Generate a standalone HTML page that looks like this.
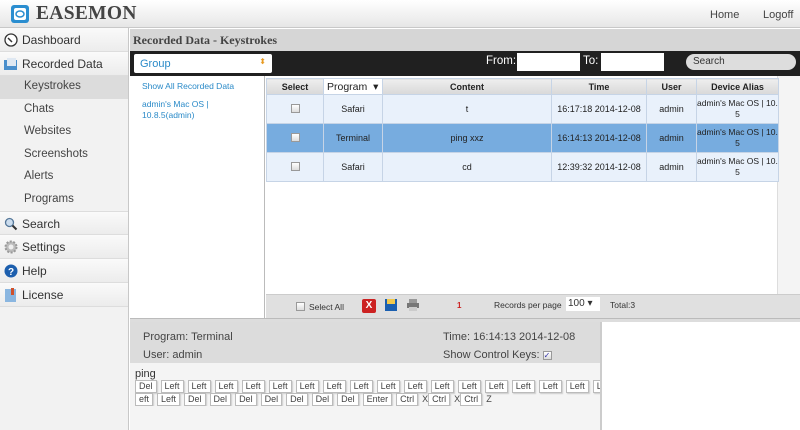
<!DOCTYPE html>
<html><head><meta charset="utf-8"><style>
*{box-sizing:border-box;margin:0;padding:0}
body{width:800px;height:430px;overflow:hidden;font-family:"Liberation Sans","DejaVu Sans",sans-serif;background:#fff;position:relative;font-size:12px;color:#333}
.abs{position:absolute}
#hdr{left:0;top:0;width:800px;height:28px;background:linear-gradient(#fff,#e6e6e6);border-bottom:1px solid #c8c8c8}
#logo{left:36px;top:3px;font-family:"Liberation Serif",serif;font-weight:bold;font-size:19.5px;color:#444;letter-spacing:.3px}
#side{left:0;top:28px;width:129px;height:402px;background:#f2f2f2;border-right:1px solid #c8c8c8}
.si{position:absolute;left:0;width:128px;height:24px;border-bottom:1px solid #ddd;background:linear-gradient(#fafafa,#ececec);font-size:12px;color:#333;padding:5px 0 0 22px}
.sub{position:absolute;left:24px;font-size:11.5px;color:#444}
.ico{position:absolute;left:4px;top:5px;width:14px;height:14px}
#title{left:130px;top:29px;width:670px;height:22px;background:#d6d6d6;font-family:"Liberation Serif",serif;font-weight:bold;font-size:12px;color:#444;padding:4px 0 0 3px}
#bar{left:130px;top:51px;width:670px;height:25px;background:#202020}
table{border-collapse:collapse;font-size:9px;color:#222;table-layout:fixed}
td,th{border:1px solid #c6d4e6;text-align:center;padding:0;overflow:hidden}
th{background:linear-gradient(#eee,#d8d8d8);height:16px;font-size:9px}
tr.r td{background:#e9f1fb;height:29px}
tr.s td{background:#77acdf}
td.d{font-size:8.5px;line-height:11px;white-space:nowrap}
.cb{display:inline-block;width:9px;height:9px;border:1px solid #999;background:linear-gradient(#fff,#ddd)}
.k{display:inline-block;border:1px solid #bbb;background:#fff;box-shadow:1px 1px 1px #ccc;padding:0 3px;margin-right:4px;font-size:9px;line-height:11px}
</style></head><body>
<div id="hdr" class="abs"></div>
<svg class="abs" style="left:11px;top:5px" width="18" height="18"><rect x="0" y="0" width="18" height="18" rx="3" fill="#2b8ed0"/><rect x="3" y="3" width="12" height="12" rx="2" fill="#fff"/><ellipse cx="9" cy="9" rx="4" ry="3" fill="none" stroke="#2b8ed0" stroke-width="1.5"/></svg>
<div id="logo" class="abs">EASEMON</div>
<div class="abs" style="left:710px;top:9px;font-size:11px;color:#444">Home</div>
<div class="abs" style="left:763px;top:9px;font-size:11px;color:#444">Logoff</div>

<div id="side" class="abs">
<div class="si" style="top:0"><svg class="ico" viewBox="0 0 14 14"><circle cx="7" cy="7" r="6" fill="#fff" stroke="#333" stroke-width="1.3"/><path d="M4 5l4 4" stroke="#333" stroke-width="1.5"/></svg>Dashboard</div>
<div class="si" style="top:24px"><svg class="ico" viewBox="0 0 14 14"><rect x="0" y="3" width="13" height="10" fill="#4a8fcc"/><rect x="3" y="1" width="9" height="8" fill="#dfe8f2"/></svg>Recorded Data</div>
<div class="abs" style="left:0;top:48px;width:128px;height:23px;background:#dcdcdc"></div>
<div class="sub" style="top:52px">Keystrokes</div>
<div class="sub" style="top:75px">Chats</div>
<div class="sub" style="top:97px">Websites</div>
<div class="sub" style="top:120px">Screenshots</div>
<div class="sub" style="top:142px">Alerts</div>
<div class="sub" style="top:165px">Programs</div>
<div class="si" style="top:183px;border-top:1px solid #ddd"><svg class="ico" viewBox="0 0 14 14"><circle cx="5.5" cy="5.5" r="4" fill="#cde" stroke="#579" stroke-width="1.3"/><path d="M8.5 8.5l4 4" stroke="#333" stroke-width="2"/></svg>Search</div>
<div class="si" style="top:207px"><svg class="ico" viewBox="0 0 14 14"><circle cx="7" cy="7" r="5.5" fill="#bbb" stroke="#999" stroke-width="2" stroke-dasharray="2 1.5"/><circle cx="7" cy="7" r="2.5" fill="#eee"/></svg>Settings</div>
<div class="si" style="top:231px"><svg class="ico" viewBox="0 0 14 14"><circle cx="7" cy="7" r="6.5" fill="#1d5fae"/><text x="7" y="11" font-size="10" font-weight="bold" fill="#fff" text-anchor="middle" font-family="Liberation Sans">?</text></svg>Help</div>
<div class="si" style="top:255px"><svg class="ico" viewBox="0 0 14 14"><rect x="1" y="1" width="11" height="13" fill="#8ab6e0"/><rect x="7" y="0" width="3" height="7" fill="#d0502a"/></svg>License</div>
</div>

<div id="title" class="abs">Recorded Data - Keystrokes</div>
<div id="bar" class="abs"></div>
<div class="abs" style="left:134px;top:54px;width:138px;height:19px;background:#fff;border-radius:2px;color:#2a8ac8;font-size:11px;padding:4px 0 0 6px">Group<span style="position:absolute;right:6px;top:3px;color:#e89a20;font-size:8px">⬍</span></div>
<div class="abs" style="left:486px;top:55px;color:#fff;font-size:11.5px">From:</div>
<div class="abs" style="left:517px;top:53px;width:63px;height:18px;background:#fff"></div>
<div class="abs" style="left:583px;top:55px;color:#fff;font-size:11.5px">To:</div>
<div class="abs" style="left:601px;top:53px;width:63px;height:18px;background:#fff"></div>
<div class="abs" style="left:686px;top:54px;width:110px;height:16px;background:#ddd;border-radius:8px;font-size:10px;padding:2px 0 0 7px;color:#333">Search</div>

<div class="abs" style="left:130px;top:76px;width:135px;height:242px;background:#fff;border-right:1px solid #bbb"></div>
<div class="abs" style="left:142px;top:81px;font-size:8.5px;color:#2a8ac8">Show All Recorded Data</div>
<div class="abs" style="left:142px;top:99px;font-size:8.5px;color:#2a8ac8;line-height:11px">admin's Mac OS |<br>10.8.5(admin)</div>

<div class="abs" style="left:266px;top:76px;width:534px;height:218px;background:#fff"></div>
<div class="abs" style="left:777px;top:76px;width:23px;height:218px;background:#f4f4f4;border-left:1px solid #ddd"></div>
<table class="abs" style="left:266px;top:78px;width:512px">
<colgroup><col style="width:57px"><col style="width:59px"><col style="width:169px"><col style="width:95px"><col style="width:50px"><col style="width:82px"></colgroup>
<tr><th>Select</th><th style="background:#fff;text-align:left;font-weight:normal;font-size:10.5px;padding-left:3px">Program &nbsp;▾</th><th>Content</th><th>Time</th><th>User</th><th>Device Alias</th></tr>
<tr class="r"><td><span class="cb"></span></td><td>Safari</td><td>t</td><td>16:17:18 2014-12-08</td><td>admin</td><td class="d">admin's Mac OS | 10.8.<br>5</td></tr>
<tr class="r s"><td><span class="cb"></span></td><td>Terminal</td><td>ping xxz</td><td>16:14:13 2014-12-08</td><td>admin</td><td class="d">admin's Mac OS | 10.8.<br>5</td></tr>
<tr class="r"><td><span class="cb"></span></td><td>Safari</td><td>cd</td><td>12:39:32 2014-12-08</td><td>admin</td><td class="d">admin's Mac OS | 10.8.<br>5</td></tr>
</table>

<div class="abs" style="left:266px;top:294px;width:534px;height:24px;background:#e0e0e0;border-top:1px solid #ccc;font-size:8.5px;color:#333"></div>
<span class="abs cb" style="left:296px;top:302px"></span>
<div class="abs" style="left:309px;top:302px;font-size:8.5px">Select All</div>
<div class="abs" style="left:362px;top:299px;width:14px;height:14px;background:#c22;color:#fff;font-weight:bold;font-size:10px;text-align:center;line-height:14px;border-radius:2px">X</div>
<svg class="abs" style="left:385px;top:299px" width="12" height="12"><rect width="12" height="12" fill="#1a5fb0"/><rect x="2" y="0" width="8" height="5" fill="#f2c94c"/></svg>
<svg class="abs" style="left:407px;top:299px" width="12" height="12"><rect x="2" y="0" width="8" height="4" fill="#999"/><rect x="0" y="4" width="12" height="5" fill="#777"/><rect x="2" y="8" width="8" height="4" fill="#ccc"/></svg>
<div class="abs" style="left:457px;top:301px;font-size:8px;color:#c22;font-weight:bold">1</div>
<div class="abs" style="left:494px;top:300px;font-size:8.5px">Records per page</div>
<div class="abs" style="left:566px;top:297px;width:34px;height:14px;background:#fff;font-size:10px;padding:1px 0 0 2px">100 ▾</div>
<div class="abs" style="left:610px;top:300px;font-size:8.5px">Total:3</div>

<div class="abs" style="left:130px;top:318px;width:670px;height:4px;background:#ddd;border-top:1px solid #bbb"></div>
<div class="abs" style="left:130px;top:322px;width:470px;height:41px;background:#dcdcdc"></div>
<div class="abs" style="left:130px;top:363px;width:470px;height:67px;background:#f4f4f4"></div>
<div class="abs" style="left:600px;top:322px;width:2px;height:108px;background:#ccc"></div>
<div class="abs" style="left:143px;top:331px;font-size:11px;color:#444">Program: Terminal</div>
<div class="abs" style="left:143px;top:349px;font-size:11px;color:#444">User: admin</div>
<div class="abs" style="left:443px;top:331px;font-size:11px;color:#444">Time: 16:14:13 2014-12-08</div>
<div class="abs" style="left:443px;top:349px;font-size:11px;color:#444">Show Control Keys: <span class="cb" style="vertical-align:middle;color:#33a;font-size:8px;line-height:7px">✓</span></div>
<div class="abs" style="left:135px;top:368px;font-size:11px;color:#333">ping</div>
<div class="abs" style="left:135px;top:380px;width:465px;white-space:nowrap;overflow:hidden;font-size:9px;color:#444">
<div style="height:13px"><span class="k">Del</span><span class="k">Left</span><span class="k">Left</span><span class="k">Left</span><span class="k">Left</span><span class="k">Left</span><span class="k">Left</span><span class="k">Left</span><span class="k">Left</span><span class="k">Left</span><span class="k">Left</span><span class="k">Left</span><span class="k">Left</span><span class="k">Left</span><span class="k">Left</span><span class="k">Left</span><span class="k">Left</span><span class="k">L</span></div>
<div><span class="k">eft</span><span class="k">Left</span><span class="k">Del</span><span class="k">Del</span><span class="k">Del</span><span class="k">Del</span><span class="k">Del</span><span class="k">Del</span><span class="k">Del</span><span class="k">Enter</span><span class="k">Ctrl</span>X<span class="k">Ctrl</span>X<span class="k">Ctrl</span>Z</div>
</div>
</body></html>
